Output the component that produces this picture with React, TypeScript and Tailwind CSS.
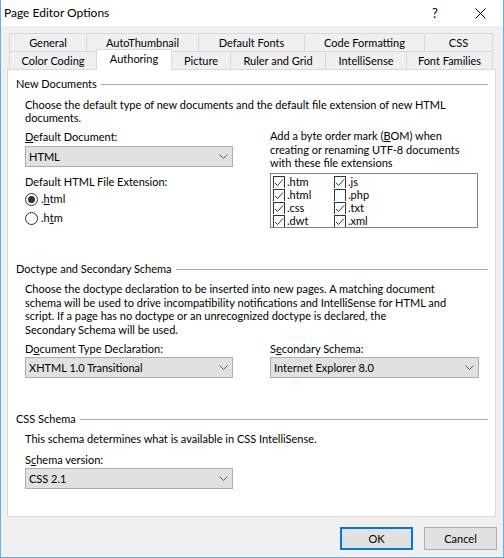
import React from "react";

type TabDef = { label: string; cls: string };

const topRow: TabDef[] = [
  { label: "General", cls: "w-[77px] border-l" },
  { label: "AutoThumbnail", cls: "w-[112px] border-l" },
  { label: "Default Fonts", cls: "w-[106px] border-l" },
  { label: "Code Formatting", cls: "w-[120px] border-l" },
  { label: "CSS", cls: "w-[69px] border-l border-r" },
];

const bottomRow: TabDef[] = [
  { label: "Color Coding", cls: "w-[87px] border-l" },
  { label: "Authoring", cls: "" },
  { label: "Picture", cls: "w-[58px]" },
  { label: "Ruler and Grid", cls: "w-[95px] border-l" },
  { label: "IntelliSense", cls: "w-[81px] border-l" },
  { label: "Font Families", cls: "w-[87px] border-l border-r" },
];

function Tab({ tab }: { tab: TabDef }) {
  if (tab.label === "Authoring") {
    return (
      <div className="relative z-10 -mt-[2px] flex h-[21px] w-[76px] items-center justify-center border-x border-t border-[#d9d9d9] bg-white pb-[2px]">
        {tab.label}
      </div>
    );
  }
  return (
    <div
      className={`flex h-[18px] items-center justify-center border-t border-[#d9d9d9] bg-[#f0f0f0] ${tab.cls}`}
    >
      {tab.label}
    </div>
  );
}

function Chevron() {
  return (
    <svg width="9" height="5" viewBox="0 0 9 5" className="shrink-0">
      <polyline points="0.5,0.5 4.5,4.5 8.5,0.5" fill="none" stroke="#5a5a5a" strokeWidth="1" />
    </svg>
  );
}

function Select({ value, cls }: { value: string; cls: string }) {
  return (
    <div
      className={`flex h-[21px] items-center justify-between border border-[#adadad] bg-[#e1e1e1] pl-[3px] pr-[4px] ${cls}`}
    >
      <span>{value}</span>
      <Chevron />
    </div>
  );
}

function GroupHeader({ title, cls }: { title: string; cls: string }) {
  return (
    <div className={`flex h-[14px] items-center pl-[8px] pr-[7px] ${cls}`}>
      <span className="whitespace-nowrap">{title}</span>
      <div className="ml-[4px] h-px flex-1 bg-[#a9a9a9]" />
    </div>
  );
}

function Radio({ checked, children }: { checked: boolean; children: React.ReactNode }) {
  return (
    <div className="flex h-[14px] items-center">
      <div className="flex h-[13px] w-[13px] items-center justify-center rounded-full border border-[#333333] bg-white">
        {checked && <div className="h-[7px] w-[7px] rounded-full bg-[#333333]" />}
      </div>
      <span className="ml-[3px]">{children}</span>
    </div>
  );
}

function CheckItem({ checked, label }: { checked: boolean; label: string }) {
  return (
    <div className="flex h-[13px] items-start overflow-hidden">
      <div className="mt-[1px] flex h-[13px] w-[12px] shrink-0 items-start justify-center border-x border-t border-[#333333] bg-white">
        {checked && (
          <svg width="10" height="10" viewBox="0 0 10 10" className="mt-[1px]">
            <polyline points="1,5 3.5,7.5 9,1.5" fill="none" stroke="#333333" strokeWidth="1" />
          </svg>
        )}
      </div>
      <span className="ml-[2px] leading-[14px]">{label}</span>
    </div>
  );
}

export default function App() {
  return (
    <div className="flex h-[558px] w-[504px] flex-col border-x border-b border-[#63b0e8] bg-[#f0f0f0] font-['Lato','Liberation_Sans',sans-serif] text-[11px] leading-[14px] text-black">
      {/* Title bar */}
      <div className="flex h-[26px] shrink-0 items-center bg-white">
        <span className="pl-[3px] text-[12px]">Page Editor Options</span>
        <div className="ml-auto flex h-full">
          <div className="flex h-full w-[46px] items-center justify-center pl-[2px] text-[13px]">?</div>
          <div className="flex h-full w-[46px] items-center justify-center">
            <svg width="11" height="11" viewBox="0 0 11 11">
              <path d="M0.5,0.5 L10.5,10.5 M10.5,0.5 L0.5,10.5" stroke="#000" strokeWidth="1" fill="none" />
            </svg>
          </div>
        </div>
      </div>

      {/* Tab strip */}
      <div className="ml-[8px] mt-[7px] flex flex-col">
        <div className="flex h-[18px]">
          {topRow.map((t) => (
            <Tab key={t.label} tab={t} />
          ))}
        </div>
        <div className="flex h-[18px] items-start">
          {bottomRow.map((t) => (
            <Tab key={t.label} tab={t} />
          ))}
        </div>
      </div>

      {/* Tab page */}
      <div className="ml-[6px] flex h-[448px] w-[489px] flex-col border border-[#d9d9d9] bg-white">
        <GroupHeader title="New Documents" cls="mt-[7px]" />
        <div className="mt-[7px] whitespace-nowrap pl-[17px] leading-[13px]">
          Choose the default type of new documents and the default file extension of new HTML
          <br />
          documents.
        </div>

        <div className="flex h-[104px] pl-[17px]">
          <div className="flex w-[245px] flex-col">
            <div className="mt-[6px] h-[14px]">
              <span className="underline">D</span>efault Document:
            </div>
            <Select value="HTML" cls="mt-[2px] w-[208px]" />
            <div className="mt-[8px] h-[14px]">Default HTML File Extension:</div>
            <div className="mt-[3px]">
              <Radio checked>
                .<span className="underline">h</span>tml
              </Radio>
            </div>
            <div className="mt-[5px]">
              <Radio checked={false}>
                .h<span className="underline">t</span>m
              </Radio>
            </div>
          </div>

          <div className="flex flex-col">
            <div className="mt-[5px] whitespace-nowrap leading-[13.5px]">
              Add a byte order mark (<span className="underline">B</span>OM) when
              <br />
              creating or renaming UTF-8 documents
              <br />
              with these file extensions
            </div>
            <div className="mt-[3px] h-[55px] w-[208px] overflow-hidden border border-[#828282] bg-white pt-[1px]">
              <div className="grid grid-cols-[61px_1fr] pl-[2px]">
                <CheckItem checked label=".htm" />
                <CheckItem checked label=".js" />
                <CheckItem checked label=".html" />
                <CheckItem checked={false} label=".php" />
                <CheckItem checked label=".css" />
                <CheckItem checked label=".txt" />
                <CheckItem checked label=".dwt" />
                <CheckItem checked label=".xml" />
              </div>
            </div>
          </div>
        </div>

        <GroupHeader title="Doctype and Secondary Schema" cls="mt-[34px]" />
        <div className="mt-[6px] whitespace-nowrap pl-[17px] leading-[13.5px]">
          Choose the doctype declaration to be inserted into new pages. A matching document
          <br />
          schema will be used to drive incompatibility notifications and IntelliSense for HTML and
          <br />
          script. If a page has no doctype or an unrecognized doctype is declared, the
          <br />
          Secondary Schema will be used.
        </div>
        <div className="mt-[6px] flex h-[14px] pl-[17px]">
          <div className="w-[245px]">
            D<span className="underline">o</span>cument Type Declaration:
          </div>
          <div>
            S<span className="underline">e</span>condary Schema:
          </div>
        </div>
        <div className="mt-[1px] flex pl-[17px]">
          <Select value="XHTML 1.0 Transitional" cls="w-[208px]" />
          <Select value="Internet Explorer 8.0" cls="ml-[37px] w-[209px]" />
        </div>

        <GroupHeader title="CSS Schema" cls="mt-[34px]" />
        <div className="mt-[6px] h-[14px] pl-[17px]">
          This schema determines what is available in CSS IntelliSense.
        </div>
        <div className="mt-[7px] h-[14px] pl-[17px]">
          S<span className="underline">c</span>hema version:
        </div>
        <div className="mt-[1px] pl-[17px]">
          <Select value="CSS 2.1" cls="w-[208px]" />
        </div>
      </div>

      {/* Dialog buttons */}
      <div className="mt-[10px] flex justify-end gap-[11px] pr-[6px]">
        <button className="flex h-[23px] w-[73px] items-center justify-center border-2 border-[#0078d7] bg-[#e1e1e1]">
          OK
        </button>
        <button className="flex h-[23px] w-[73px] items-center justify-center border border-[#adadad] bg-[#e1e1e1]">
          Cancel
        </button>
      </div>
    </div>
  );
}
